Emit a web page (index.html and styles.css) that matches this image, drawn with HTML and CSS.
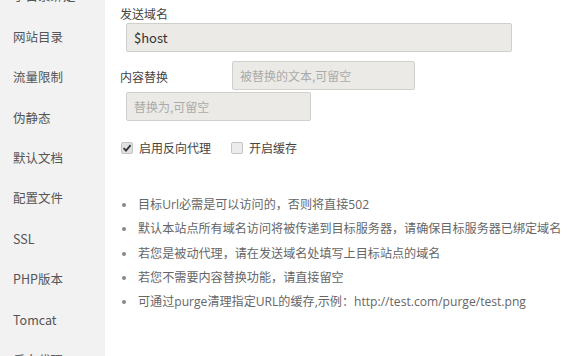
FILE: index.html
```html
<!DOCTYPE html>
<html lang="zh-CN">
<head>
<meta charset="utf-8">
<link rel="stylesheet" href="styles.css">
</head>
<body>
<div class="page">
  <aside class="sidebar">
    <ul class="menu">
      <li>子目录绑定</li>
      <li>网站目录</li>
      <li>流量限制</li>
      <li>伪静态</li>
      <li>默认文档</li>
      <li>配置文件</li>
      <li>SSL</li>
      <li>PHP版本</li>
      <li>Tomcat</li>
      <li>反向代理</li>
    </ul>
  </aside>
  <main class="content">
    <div class="label">发送域名</div>
    <div class="input wide">$host</div>
    <div class="row">
      <div class="row-label">内容替换</div>
      <div class="input mid placeholder">被替换的文本,可留空</div>
    </div>
    <div class="input short placeholder second">替换为,可留空</div>
    <div class="checks">
      <span class="check">
        <span class="box checked"><svg viewBox="0 0 12 12" width="12" height="12"><path d="M2.6 6.2 L5 8.6 L9.6 3.2" fill="none" stroke="#333" stroke-width="1.8"/></svg></span>
        <span>启用反向代理</span>
      </span>
      <span class="check">
        <span class="box"></span>
        <span>开启缓存</span>
      </span>
    </div>
    <ul class="tips">
      <li>目标Url必需是可以访问的，否则将直接502</li>
      <li>默认本站点所有域名访问将被传递到目标服务器，请确保目标服务器已绑定域名</li>
      <li>若您是被动代理，请在发送域名处填写上目标站点的域名</li>
      <li>若您不需要内容替换功能，请直接留空</li>
      <li>可通过purge清理指定URL的缓存,示例：http://test.com/purge/test.png</li>
    </ul>
  </main>
</div>
</body>
</html>
```
FILE: styles.css
```css
* { box-sizing: border-box; }
html, body {
  margin: 0;
  padding: 0;
  background: #fff;
  width: 576px;
  height: 356px;
  overflow: hidden;
  font-family: "Noto Sans CJK SC", "Noto Sans", sans-serif;
}
.page {
  display: flex;
  height: 356px;
}
.sidebar {
  width: 105px;
  flex: none;
  background: #f2f2f2;
  overflow: hidden;
}
.menu {
  list-style: none;
  margin: -23.6px 0 0 0;
  padding: 0;
}
.menu li {
  height: 40.4px;
  line-height: 40.4px;
  padding-left: 13px;
  font-size: 12.5px;
  color: #555;
  white-space: nowrap;
}
.content {
  flex: 1;
  padding: 5px 0 0 15px;
  color: #444;
  font-size: 12px;
}
.label {
  line-height: 18px;
  height: 18px;
}
.input {
  height: 29px;
  line-height: 27px;
  border: 1px solid #cfcfcc;
  border-radius: 2px;
  background: #ebeae6;
  padding-left: 7px;
  font-size: 13px;
  color: #333;
  white-space: nowrap;
  overflow: hidden;
}
.input.placeholder {
  color: #aaa;
  font-size: 12px;
}
.wide {
  width: 386px;
  margin-left: 6px;
}
.row {
  display: flex;
  align-items: center;
  margin-top: 9px;
}
.row-label {
  width: 112px;
  line-height: 18px;
  padding-top: 2px;
}
.mid {
  width: 183px;
}
.short {
  width: 185px;
  margin-left: 6px;
}
.second {
  margin-top: 2px;
}
.checks {
  display: flex;
  margin-top: 18px;
  height: 18px;
  align-items: center;
  margin-left: 1px;
}
.check {
  display: flex;
  align-items: center;
  gap: 6px;
  margin-right: 20px;
  line-height: 18px;
}
.box {
  width: 12px;
  height: 12px;
  border: 1px solid #c4c4c4;
  border-radius: 2px;
  background: #ececec;
  display: block;
  position: relative;
}
.box svg {
  position: absolute;
  left: -1px;
  top: -1px;
}
.box.checked {
  background: #e0e0e0;
}
.tips {
  list-style: none;
  margin: 36px 0 0 0;
  padding: 0;
  font-family: "Open Sans", "Noto Sans CJK SC", sans-serif;
  font-size: 12.1px;
}
.tips li {
  line-height: 24.3px;
  height: 24.3px;
  color: #666;
  white-space: nowrap;
  display: flex;
  align-items: center;
}
.tips li::before {
  content: "";
  width: 4px;
  height: 4px;
  border-radius: 50%;
  background: #888;
  margin-left: 2px;
  margin-right: 12px;
  flex: none;
}
```
